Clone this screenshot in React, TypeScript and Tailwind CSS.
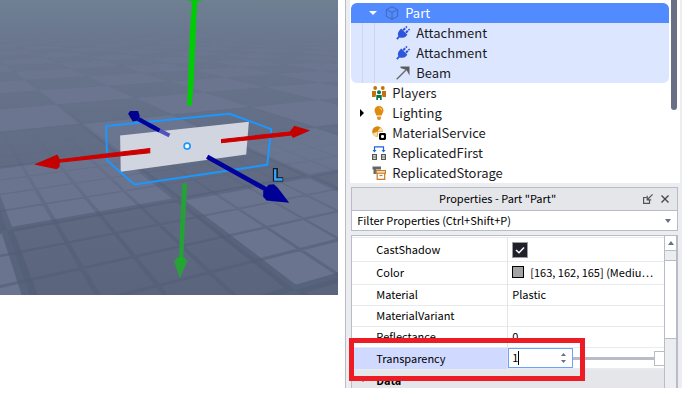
import React from "react";

const FONT = "font-['Noto_Sans_CJK_SC','Noto_Sans',sans-serif]";

/* ---------- 3D viewport ---------- */

type Pt = [number, number];

// Perspective of the baseplate: a tile corner and the two vanishing points.
const ORIGIN: Pt = [885, 870];
const VP_RIGHT: Pt = [3790, 15];
const VP_LEFT: Pt = [-215, 15];

function project(i: number, j: number): Pt | null {
  const a = 0.2 * i;
  const b = 0.4666 * j;
  const w = 1 + a + b;
  if (w < 0.12) return null;
  return [
    (ORIGIN[0] + a * VP_RIGHT[0] + b * VP_LEFT[0]) / w,
    (ORIGIN[1] + a * VP_RIGHT[1] + b * VP_LEFT[1]) / w,
  ];
}

function quad(i0: number, j0: number, i1: number, j1: number): string {
  const pts = [project(i0, j0), project(i1, j0), project(i1, j1), project(i0, j1)];
  if (pts.some((p) => p === null)) return "";
  const ps = pts as Pt[];
  if (ps.every((p) => p[0] < -40) || ps.every((p) => p[0] > 1060)) return "";
  if (ps.every((p) => p[1] > 900)) return "";
  return "M" + ps.map((p) => `${p[0].toFixed(1)} ${p[1].toFixed(1)}`).join("L") + "Z";
}

function buildFloor() {
  let light = "";
  let major = "";
  let minor = "";
  for (let j = -2; j < 34; j++) {
    for (let i = -4; i < 40; i++) {
      if ((i + j) % 2 === 0) light += quad(i, j, i + 1, j + 1);
      if (j < 9) {
        major += quad(i - 0.03, j, i + 0.03, j + 1);
        major += quad(i, j - 0.03, i + 1, j + 0.03);
      }
      if (j < 5) {
        for (let k = 1; k < 4; k++) {
          const s = k / 4;
          minor += quad(i + s - 0.012, j, i + s + 0.012, j + 1);
          minor += quad(i, j + s - 0.012, i + 1, j + s + 0.012);
        }
      }
    }
  }
  return { light, major, minor };
}

const floor = buildFloor();

function Viewport() {
  return (
    <svg viewBox="0 0 1014 885" className="block w-full" role="img" aria-label="3D viewport">
      <defs>
        <linearGradient id="ground" x1="0" y1="0" x2="0" y2="1">
          <stop offset="0" stopColor="#6a788e" />
          <stop offset="0.4" stopColor="#636f86" />
          <stop offset="1" stopColor="#5b647d" />
        </linearGradient>
        <linearGradient id="haze" x1="0" y1="0" x2="0" y2="1">
          <stop offset="0" stopColor="#6f8093" />
          <stop offset="0.055" stopColor="#6c7c91" />
          <stop offset="0.18" stopColor="#6a778e" stopOpacity="0.2" />
          <stop offset="0.4" stopColor="#6a778e" stopOpacity="0" />
        </linearGradient>
        <linearGradient id="lines" gradientUnits="userSpaceOnUse" x1="0" y1="300" x2="0" y2="720">
          <stop offset="0" stopColor="#515d76" stopOpacity="0.04" />
          <stop offset="1" stopColor="#515d76" stopOpacity="0.75" />
        </linearGradient>
        <linearGradient id="fineLines" gradientUnits="userSpaceOnUse" x1="0" y1="380" x2="0" y2="720">
          <stop offset="0" stopColor="#515d76" stopOpacity="0" />
          <stop offset="1" stopColor="#515d76" stopOpacity="0.6" />
        </linearGradient>
      </defs>
      <rect width="1014" height="885" fill="url(#ground)" />
      <path d={floor.light} fill="#6b7690" fillOpacity="0.9" />
      <path d={floor.minor} fill="url(#fineLines)" />
      <path d={floor.major} fill="url(#lines)" />
      <rect width="1014" height="885" fill="url(#haze)" />

      <path d="M360 406L746 365L738 463L362 515Z" fill="#d1d5df" />
      <path
        d="M318 378L688 341L813 387L801 494L403 553L321 481Z"
        fill="none"
        stroke="#1a98ff"
        strokeWidth="6"
        strokeLinejoin="round"
      />

      <path d="M562 0H606V3H591L587 100L580 255L575 316H561L569 100L576 3H562Z" fill="#00cc06" />
      <path d="M546 553Q553 545 561 553L556 640L549 780H537L540 670Z" fill="#24a238" />
      <path d="M522 783L531 773H553L562 783L539 834Z" fill="#2aa03a" />
      <path d="M536 770H549V782L543 788L536 782Z" fill="#12b51c" />

      <path d="M449 445L179 479V486L449 458Z" fill="#cc0000" stroke="#cc0000" strokeWidth="3" />
      <path d="M102 493L172 463L180 480L178 501L170 507Z" fill="#c40000" />
      <path d="M664 418L873 395V405L664 428Z" fill="#cc0000" stroke="#cc0000" strokeWidth="3" />
      <path d="M930 391L882 377L868 396L878 414Z" fill="#c40000" />

      <path d="M415 357L470 387" stroke="#00009c" strokeWidth="13" />
      <path d="M464 384L508 406" stroke="#5252bb" strokeWidth="12" />
      <path d="M445 374L478 391" stroke="#00009c" strokeWidth="12" />
      <path d="M384 341L390 333H414L419 348L414 361L398 364Z" fill="#000090" />
      <path d="M621 470L805 572" stroke="#00009c" strokeWidth="14" />
      <path d="M867 608L799 601L789 590V573L805 554L821 552L832 562Z" fill="#000096" />

      <circle cx="561" cy="438" r="9" fill="#fff" stroke="#1a98ff" strokeWidth="5" />
      <path d="M818 504H833V531H849V544H818Z" fill="#111820" />
      <path d="M825 507V538H847" fill="none" stroke="#35a2ff" strokeWidth="7" />
    </svg>
  );
}

/* ---------- Explorer ---------- */

function CubeIcon() {
  return (
    <svg viewBox="0 0 14 14" className="size-[14px]" fill="none" stroke="#4668b8" strokeWidth="1">
      <path d="M7 .7L12.7 3.6V10.4L7 13.3L1.3 10.4V3.6ZM1.3 3.6L7 6.5L12.7 3.6M7 6.5V13.3" />
    </svg>
  );
}

function PlugIcon() {
  return (
    <svg viewBox="0 0 14 14" className="size-[14px]" fill="#2f55dc">
      <path d="M3.6 4.2L5.2 2.600L11.400 8.8L9.8 10.400C8 12 5 12.200 3.6 11.400L1.500 13.7L.2 12.400L2.300 10.2C1.500 8.5 1.800 6 3.6 4.2Z" />
      <path d="M7.200 4.200L9.200 2.200M9.8 6.8L11.8 4.800" stroke="#2f55dc" strokeWidth="2" />
      <path d="M9.800 1.600L11 .4M12.4 4.200L13.6 3" stroke="#2f55dc" strokeWidth="1.6" />
    </svg>
  );
}

function BeamIcon() {
  return (
    <svg viewBox="0 0 14 14" className="size-[14px]">
      <path d="M.7 13.3L11 3" stroke="#666" strokeWidth="1.3" />
      <path d="M4.5 .5H13.5V9.5L10.5 4L4.5 2Z" fill="#5c5c5c" />
    </svg>
  );
}

function PlayersIcon() {
  return (
    <svg viewBox="0 0 14 14" className="size-[14px]">
      <g fill="#c4710a">
        <circle cx="3.2" cy="2" r="1.9" />
        <circle cx="10.8" cy="2" r="1.9" />
        <path d="M0 5H4V8.5L3.5 11H0ZM14 5H10V8.5L10.500 11H14Z" />
      </g>
      <g fill="#08744a">
        <circle cx="7" cy="6.200" r="2" />
        <path d="M4.300 9H9.700V14H8V12H6V14H4.300Z" />
      </g>
    </svg>
  );
}

function BulbIcon() {
  return (
    <svg viewBox="0 0 14 14" className="size-[14px]">
      <path d="M7 0C9.600 0 11.500 2 11.500 4.400C11.500 6.500 10 7.300 9.700 9.500H4.300C4 7.300 2.500 6.500 2.500 4.400C2.500 2 4.400 0 7 0Z" fill="#e08a10" />
      <path d="M5 10.500H9V12.300L8 14H6L5 12.300Z" fill="#dc9838" />
      <path d="M7.500 1.800Q9.600 2.300 9.700 4.300" fill="none" stroke="#fbdca8" strokeWidth="1" />
    </svg>
  );
}

function MaterialIcon() {
  return (
    <svg viewBox="0 0 14 14" className="size-[14px]">
      <circle cx="5.500" cy="5.500" r="5.300" fill="#d9860e" />
      <path d="M5.500 5.500L8.500 1.200A5.300 5.300 0 0 1 10.800 5.500ZM5.500 5.500V10.800A5.300 5.300 0 0 1 .8 7.500Z" fill="#f7dcae" />
      <rect x="6" y="6" width="8" height="8" fill="#fff" />
      <path d="M8 7H13L14 8V13L13 14H8L7 13V8Z" />
      <rect x="9" y="9" width="3" height="3" rx="1" fill="#fff" />
    </svg>
  );
}

function ReplicatedFirstIcon() {
  return (
    <svg viewBox="0 0 14 14" className="size-[14px]" fill="none">
      <path d="M2.500 5V.8H11.500V5" stroke="#1d63cf" strokeWidth="1.200" />
      <path d="M.5 4H4.500L2.500 6.500ZM9.500 4H13.500L11.500 6.500Z" fill="#1d63cf" />
      <path d="M.6 8.600H4.400V13.400H.6ZM.6 11H4.400M9.600 8.600H13.400V13.400H9.600ZM9.600 11H13.400" stroke="#555" strokeWidth="1.200" />
    </svg>
  );
}

function StorageIcon() {
  return (
    <svg viewBox="0 0 14 14" className="size-[14px]" fill="none">
      <path d="M.5 .5H9V3.500H4V8H1.500V3.500H.5Z" fill="#666" />
      <path d="M4.200 4.700H13.500V7.200H4.200ZM5.200 7.200H12.700V13.300H5.200Z" fill="#fff" stroke="#c97a1c" strokeWidth="1.200" />
      <path d="M7.500 9.500H10.500" stroke="#c97a1c" strokeWidth="1.200" />
    </svg>
  );
}

const services = [
  { name: "Players", icon: <PlayersIcon />, arrow: false },
  { name: "Lighting", icon: <BulbIcon />, arrow: true },
  { name: "MaterialService", icon: <MaterialIcon />, arrow: false },
  { name: "ReplicatedFirst", icon: <ReplicatedFirstIcon />, arrow: false },
  { name: "ReplicatedStorage", icon: <StorageIcon />, arrow: false },
];

const children = [
  { name: "Attachment", icon: <PlugIcon /> },
  { name: "Attachment", icon: <PlugIcon /> },
  { name: "Beam", icon: <BeamIcon /> },
];

function Explorer() {
  return (
    <div className="mr-0.5 flex bg-white pl-px text-[13px] leading-5 text-[#1b1b1f]">
      <ul className="min-w-0 flex-1 pt-[3px]">
        <li className="overflow-hidden rounded-md bg-[#dce7ff]">
          <div className="flex h-5 items-center bg-[#528bff] text-white">
            <div className="flex w-[34px] justify-end self-stretch pr-2">
              <button type="button" aria-label="Collapse Part" className="flex items-center">
                <svg viewBox="0 0 8 4" className="h-1 w-2"><path d="M0 0H8L4 4Z" fill="#fff" /></svg>
              </button>
            </div>
            <CubeIcon />
            <span className="ml-1.5">Part</span>
          </div>
          <ul className="ml-[11px] border-l border-[#ccd6ee]">
            {children.map((c, n) => (
              <li key={n} className="ml-[11px] flex h-5 items-center border-l border-[#ccd6ee] pl-[21px]">
                {c.icon}
                <span className="ml-1.5">{c.name}</span>
              </li>
            ))}
          </ul>
        </li>
        {services.map((s) => (
          <li key={s.name} className="flex h-5 items-center">
            <span className="flex w-[21px] items-center pl-[9px]">
              {s.arrow && (
                <button type="button" aria-label={"Expand " + s.name}>
                  <svg viewBox="0 0 4 8" className="block h-2 w-1"><path d="M0 0V8L4 4Z" fill="#000" /></svg>
                </button>
              )}
            </span>
            {s.icon}
            <span className="ml-1.5">{s.name}</span>
          </li>
        ))}
      </ul>
      <div className="ml-0.5 w-[9px]">
        <div className="h-[110px] w-1.5 rounded-b-full bg-[#6b6f86]" />
      </div>
    </div>
  );
}

/* ---------- Properties ---------- */

const nameCell = "w-[156px] border-r border-[#e3e4e8] pb-0.5 pl-6 text-left font-normal";
const valueCell = "pb-0.5 pl-1";

function ScrollBar() {
  return (
    <div className="flex w-[14px] shrink-0 flex-col border-r-2 border-l border-[#b9bbc6] bg-white">
      <button type="button" aria-label="Scroll up" className="flex h-[14px] items-center justify-center">
        <svg viewBox="0 0 6 4" className="h-1 w-1.5"><path d="M0 4H6L3 0Z" fill="#6b6f86" /></svg>
      </button>
      <div className="h-[11px] border-y border-[#b9bbc6] bg-[#ecedf0]" />
      <div className="h-[77px]" />
      <div className="flex-1 border-t border-[#b9bbc6] bg-[#ecedf0]" />
    </div>
  );
}

function Properties() {
  return (
    <section className="mt-1 mr-1 ml-px text-[11px] leading-4 text-black">
      <header className="flex h-[23px] items-center border-x border-t border-[#b9bbc6] bg-[#e5e6ea] pr-2">
        <h2 className="flex-1 pb-0.5 text-center">Properties - Part "Part"</h2>
        <button type="button" aria-label="Undock" className="mr-2">
          <svg viewBox="0 0 10 10" className="block size-2.5" fill="none" stroke="#555" strokeWidth="1.200">
            <path d="M3.500 3.500H.6V9.400H6.500V6.500M9.600 .4L4.500 5.500M4.200 1.800V5.800H8.200" />
          </svg>
        </button>
        <button type="button" aria-label="Close">
          <svg viewBox="0 0 8 8" className="block size-2" fill="none" stroke="#444" strokeWidth="1.300">
            <path d="M.5 .5L7.500 7.500M7.500 .5L.5 7.500" />
          </svg>
        </button>
      </header>
      <div className="flex h-[21px] items-center border border-[#b9bbc6] bg-white pr-1.5 pl-[5px]">
        <input
          type="text"
          aria-label="Filter Properties"
          placeholder="Filter Properties (Ctrl+Shift+P)"
          className="min-w-0 flex-1 bg-transparent pb-0.5 outline-none placeholder:text-black"
        />
        <button type="button" aria-label="Filter history">
          <svg viewBox="0 0 6 4" className="block h-1 w-1.5"><path d="M0 0H6L3 4Z" fill="#6b6f86" /></svg>
        </button>
      </div>

      <div className="relative mt-1">
        <div className="flex h-[153px] overflow-hidden border-t border-l border-[#b9bbc6]">
          <div className="min-w-0 flex-1 overflow-hidden bg-white pt-px">
            <table className="w-full table-fixed border-separate border-spacing-0 [&_td]:border-t [&_td]:border-[#e9eaee] [&_th]:border-t [&_th]:border-t-[#e9eaee]">
              <tbody>
                <tr className="h-6">
                  <th scope="row" className={nameCell}><label htmlFor="cast-shadow">CastShadow</label></th>
                  <td className="pl-1">
                    <span className="relative block size-4">
                      <input
                        id="cast-shadow"
                        type="checkbox"
                        defaultChecked
                        className="block size-4 appearance-none border border-[#9a9ba5] bg-[#1f2129]"
                      />
                      <svg viewBox="0 0 16 16" className="pointer-events-none absolute inset-0" fill="none" stroke="#fff" strokeWidth="1.500">
                        <path d="M4 8L7 10.800L12 5.500" />
                      </svg>
                    </span>
                  </td>
                </tr>
                <tr className="h-[23px]">
                  <th scope="row" className={nameCell}>Color</th>
                  <td className={valueCell}>
                    <div className="flex items-center">
                      <span className="size-3 shrink-0 border border-black bg-[#a3a2a5]" />
                      <span className="ml-1.5 truncate">[163, 162, 165] (Mediu…</span>
                    </div>
                  </td>
                </tr>
                <tr className="h-[21px]">
                  <th scope="row" className={nameCell}>Material</th>
                  <td className={valueCell}>Plastic</td>
                </tr>
                <tr className="h-[21px]">
                  <th scope="row" className={nameCell}>MaterialVariant</th>
                  <td className={valueCell} />
                </tr>
                <tr className="h-[21px]">
                  <th scope="row" className={nameCell}>Reflectance</th>
                  <td className={valueCell}>0</td>
                </tr>
                <tr className="h-[21px]">
                  <th scope="row" className={nameCell + " bg-[#d0d9ff]"}><label htmlFor="transparency">Transparency</label></th>
                  <td className="border-b border-[#cfd8fb] p-0">
                    <div className="flex h-5 items-center">
                      <div className="flex h-5 w-[65px] shrink-0 items-center border border-[#6f9fff] bg-white pr-1.5 pl-[3px]">
                        <input
                          id="transparency"
                          type="text"
                          inputMode="decimal"
                          defaultValue="1"
                          size={1}
                          className="w-1.5 bg-transparent pb-0.5 outline-none"
                        />
                        <span className="h-3.5 w-px bg-black" aria-hidden="true" />
                        <span className="ml-auto flex flex-col gap-1">
                          <button type="button" aria-label="Increase">
                            <svg viewBox="0 0 5 3" className="block h-[3px] w-[5px]"><path d="M0 3H5L2.500 0Z" fill="#6b6f86" /></svg>
                          </button>
                          <button type="button" aria-label="Decrease">
                            <svg viewBox="0 0 5 3" className="block h-[3px] w-[5px]"><path d="M0 0H5L2.500 3Z" fill="#6b6f86" /></svg>
                          </button>
                        </span>
                      </div>
                      <input
                        type="range"
                        aria-label="Transparency slider"
                        min={0}
                        max={1}
                        step={0.1}
                        defaultValue={1}
                        className="h-4 min-w-0 flex-1 appearance-none bg-transparent bg-[linear-gradient(#b9bbc6,#b9bbc6)] bg-[length:100%_3px] bg-center bg-no-repeat [&::-webkit-slider-thumb]:h-[15px] [&::-webkit-slider-thumb]:w-2.5 [&::-webkit-slider-thumb]:appearance-none [&::-webkit-slider-thumb]:border [&::-webkit-slider-thumb]:border-r-0 [&::-webkit-slider-thumb]:border-[#b9bbc6] [&::-webkit-slider-thumb]:bg-white"
                      />
                    </div>
                  </td>
                </tr>
                <tr className="h-[23px]">
                  <th scope="colgroup" colSpan={2} className="bg-[#e5e6ea] pb-0.5 text-left font-bold">
                    <span className="flex items-center pl-2">
                      <svg viewBox="0 0 6 4" className="mr-2.5 h-1 w-1.5"><path d="M0 0H6L3 4Z" fill="#333" /></svg>
                      Data
                    </span>
                  </th>
                </tr>
              </tbody>
            </table>
          </div>
          <ScrollBar />
        </div>
        <div className="pointer-events-none absolute top-[103px] -left-0.5 h-[43px] w-[236px] border-[5px] border-[#ed1c24]" />
      </div>
    </section>
  );
}

export default function App() {
  return (
    <main className={"flex items-start gap-[7px] bg-white pr-2 " + FONT}>
      <div className="w-[49.6%] shrink-0">
        <Viewport />
      </div>
      <div className="min-w-0 flex-1 border-l border-[#b9bbc6] bg-[#ecedf0] pl-1">
        <Explorer />
        <Properties />
      </div>
    </main>
  );
}
